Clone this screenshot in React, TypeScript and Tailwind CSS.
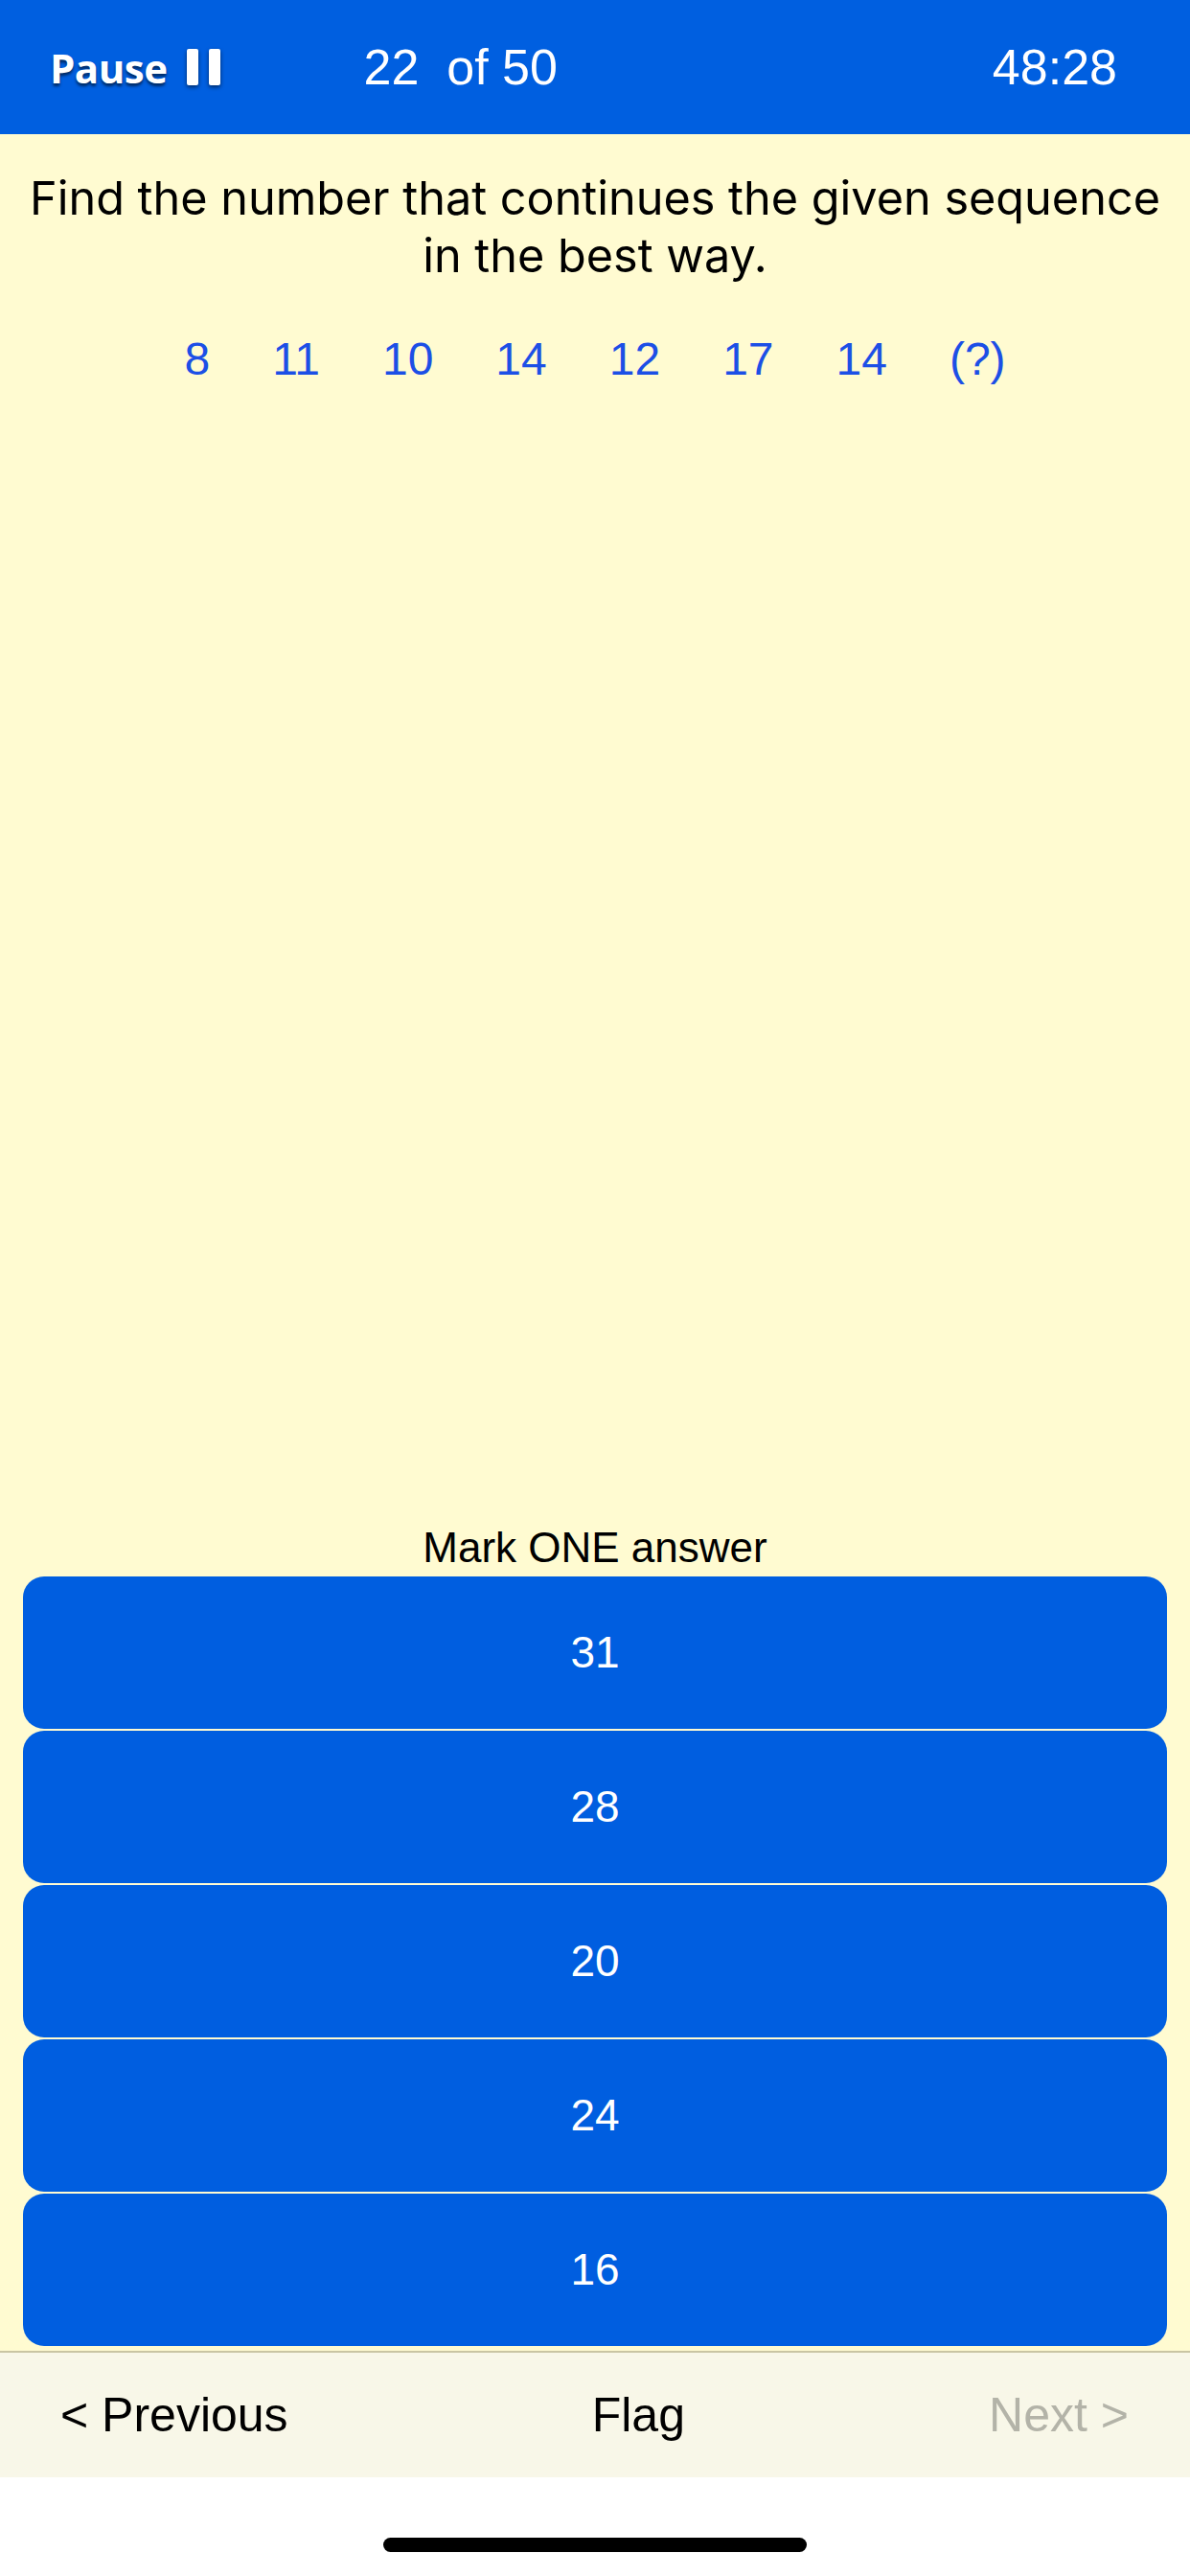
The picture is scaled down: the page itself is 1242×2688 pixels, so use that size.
import React from 'react';

const sequence = ['8', '11', '10', '14', '12', '17', '14', '(?)'];
const answers = ['31', '28', '20', '24', '16'];

function PauseIcon() {
  return (
    <span className="flex gap-[11px] [filter:drop-shadow(0_2px_2px_rgba(0,0,0,0.55))]">
      <span className="block h-[38px] w-[12px] rounded-[2px] bg-white" />
      <span className="block h-[38px] w-[12px] rounded-[2px] bg-white" />
    </span>
  );
}

export default function App() {
  return (
    <div
      className="flex h-[2688px] w-[1242px] flex-col bg-white"
      style={{ fontFamily: '"Liberation Sans", Arial, sans-serif' }}
    >
      {/* top bar */}
      <header className="flex h-[140px] shrink-0 items-center bg-[#005fe0] pl-[52px] pr-[76px] text-white">
        <div className="flex items-center gap-[20px]">
          <span className="font-['Open_Sans',sans-serif] text-[42px] font-bold tracking-[-0.5px] [text-shadow:0_3px_3px_rgba(0,0,0,0.55)]">
            Pause
          </span>
          <PauseIcon />
        </div>
        <div className="ml-[150px] text-[52px] leading-none">
          22&nbsp; of 50
        </div>
        <div className="ml-auto text-[52px] leading-none">48:28</div>
      </header>

      {/* question area */}
      <main className="flex flex-1 flex-col bg-[#fffbd1] px-[24px] pb-[5px]">
        <p className="whitespace-nowrap pt-[37px] text-center font-['Inter',sans-serif] text-[48.6px] leading-[60px] text-black">
          Find the number that continues the given sequence
          <br />
          in the best way.
        </p>
        <div className="mt-[48px] flex justify-center gap-[65px] text-[48px] leading-[60px] text-[#1c4fe6]">
          {sequence.map((n, i) => (
            <span key={i}>{n}</span>
          ))}
        </div>

        <div className="flex-1" />

        <p className="text-center text-[44px] leading-[50px] text-black">Mark ONE answer</p>
        <div className="mt-[5px] flex flex-col gap-[2px]">
          {answers.map((a) => (
            <button
              key={a}
              className="flex h-[159px] w-full items-center justify-center rounded-[22px] bg-[#005ee0] text-[46px] text-white"
            >
              {a}
            </button>
          ))}
        </div>
      </main>

      {/* bottom nav */}
      <footer className="flex h-[132px] shrink-0 items-center justify-between border-t-2 border-[#c9c5a3] bg-[#f8f7e8] pl-[63px] pr-[64px] text-[50px]">
        <span className="text-black">&lt; Previous</span>
        <span className="text-black">Flag</span>
        <span className="text-[#b3b3a8]">Next &gt;</span>
      </footer>

      <div className="flex h-[103px] shrink-0 items-start justify-center bg-white pt-[63px]">
        <div className="h-[15px] w-[442px] rounded-full bg-black" />
      </div>
    </div>
  );
}
